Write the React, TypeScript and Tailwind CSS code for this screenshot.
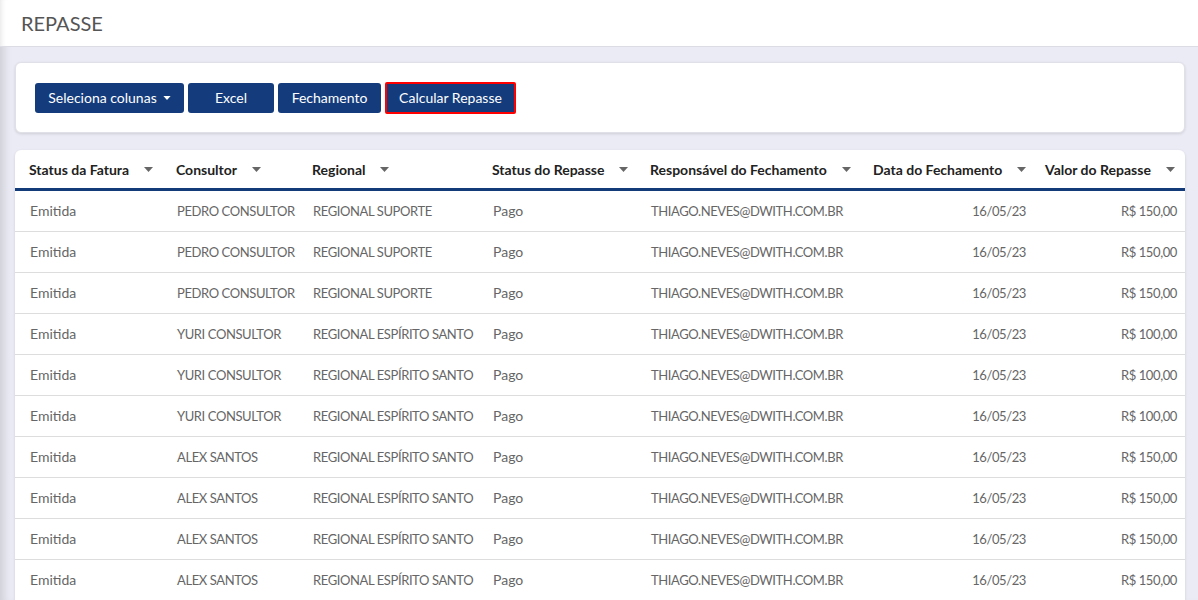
import React from 'react';

type Row = {
  fatura: string;
  consultor: string;
  regional: string;
  repasse: string;
  responsavel: string;
  data: string;
  valor: string;
};

const COLUMNS: { label: string; width: string; align: 'left' | 'right'; pr: string; caps: boolean }[] = [
  { label: 'Status da Fatura', width: 'w-[147px]', align: 'left', pr: '', caps: false },
  { label: 'Consultor', width: 'w-[136px]', align: 'left', pr: '', caps: true },
  { label: 'Regional', width: 'w-[180px]', align: 'left', pr: '', caps: true },
  { label: 'Status do Repasse', width: 'w-[158px]', align: 'left', pr: '', caps: false },
  { label: 'Responsável do Fechamento', width: 'w-[223px]', align: 'left', pr: '', caps: true },
  { label: 'Data do Fechamento', width: 'w-[172px]', align: 'right', pr: 'pr-[5px]', caps: true },
  { label: 'Valor do Repasse', width: 'w-[154px]', align: 'right', pr: 'pr-[8px]', caps: true },
];

const mk = (consultor: string, regional: string, valor: string): Row => ({
  fatura: 'Emitida',
  consultor,
  regional,
  repasse: 'Pago',
  responsavel: 'THIAGO.NEVES@DWITH.COM.BR',
  data: '16/05/23',
  valor,
});

const ROWS: Row[] = [
  mk('PEDRO CONSULTOR', 'REGIONAL SUPORTE', 'R$ 150,00'),
  mk('PEDRO CONSULTOR', 'REGIONAL SUPORTE', 'R$ 150,00'),
  mk('PEDRO CONSULTOR', 'REGIONAL SUPORTE', 'R$ 150,00'),
  mk('YURI CONSULTOR', 'REGIONAL ESPÍRITO SANTO', 'R$ 100,00'),
  mk('YURI CONSULTOR', 'REGIONAL ESPÍRITO SANTO', 'R$ 100,00'),
  mk('YURI CONSULTOR', 'REGIONAL ESPÍRITO SANTO', 'R$ 100,00'),
  mk('ALEX SANTOS', 'REGIONAL ESPÍRITO SANTO', 'R$ 150,00'),
  mk('ALEX SANTOS', 'REGIONAL ESPÍRITO SANTO', 'R$ 150,00'),
  mk('ALEX SANTOS', 'REGIONAL ESPÍRITO SANTO', 'R$ 150,00'),
  mk('ALEX SANTOS', 'REGIONAL ESPÍRITO SANTO', 'R$ 150,00'),
];

function Caret({ className, w = 9, h = 5 }: { className?: string; w?: number; h?: number }) {
  return (
    <svg width={w} height={h} viewBox="0 0 9 5" className={className}>
      <path d="M0 0h9L4.5 5z" fill="currentColor" />
    </svg>
  );
}

export default function App() {
  return (
    <div className="h-[600px] overflow-hidden bg-[#ebebf5] font-['Lato','Liberation_Sans',sans-serif] shadow-[inset_10px_0_8px_-6px_rgba(0,0,0,0.12)]">
      {/* Page header */}
      <div className="h-[47px] bg-white border-b border-[#dcdce4] flex items-center pl-[21px] shadow-[inset_6px_0_6px_-6px_rgba(0,0,0,0.15)]">
        <h1 className="text-[20px] text-[#555]">REPASSE</h1>
      </div>

      {/* Toolbar card */}
      <div className="ml-[15px] mr-[13px] mt-[15px] h-[71px] bg-white rounded-[6px] border border-[#e0e0e8] shadow-[0_1px_3px_rgba(0,0,0,0.12)] flex items-center gap-[4px] pl-[19px]">
        <button className="h-[30px] w-[149px] rounded-[3px] bg-[#143c7c] text-white text-[14px] flex items-center justify-center gap-[6px]">
          Seleciona colunas <Caret className="text-white" w={8} h={4} />
        </button>
        <button className="h-[30px] w-[86px] rounded-[3px] bg-[#143c7c] text-white text-[14px]">Excel</button>
        <button className="h-[30px] w-[103px] rounded-[3px] bg-[#143c7c] text-white text-[14px]">Fechamento</button>
        <button className="h-[32px] w-[131px] rounded-[2px] bg-[#143c7c] text-white text-[14px] border-2 border-[#ff0000]">
          Calcular Repasse
        </button>
      </div>

      {/* Table card */}
      <div className="ml-[15px] mr-[13px] mt-[17px] bg-white rounded-t-[6px] shadow-[0_1px_3px_rgba(0,0,0,0.12)]">
        <div className="flex h-[41px] border-b-[3px] border-[#133b7a]">
          {COLUMNS.map((c) => (
            <div key={c.label} className={`${c.width} shrink-0 flex items-center pl-[14px] gap-[15px] text-[14px] font-bold text-[#222]`}>
              <span>{c.label}</span>
              <Caret className="text-[#666]" />
            </div>
          ))}
        </div>
        {ROWS.map((r, i) => {
          const cells = [r.fatura, r.consultor, r.regional, r.repasse, r.responsavel, r.data, r.valor];
          return (
            <div key={i} className="flex items-baseline pt-[10px] h-[41px] border-b border-[#dddddd] text-[#666]">
              {cells.map((v, j) => {
                const c = COLUMNS[j];
                return (
                  <div
                    key={j}
                    className={`${c.width} shrink-0 flex whitespace-nowrap leading-[20px] ${
                      c.caps ? 'text-[13px] tracking-[-0.4px]' : 'text-[14px]'
                    } ${c.align === 'right' ? `justify-end ${c.pr}` : 'pl-[15px]'}`}
                  >
                    {v}
                  </div>
                );
              })}
            </div>
          );
        })}
      </div>
    </div>
  );
}
